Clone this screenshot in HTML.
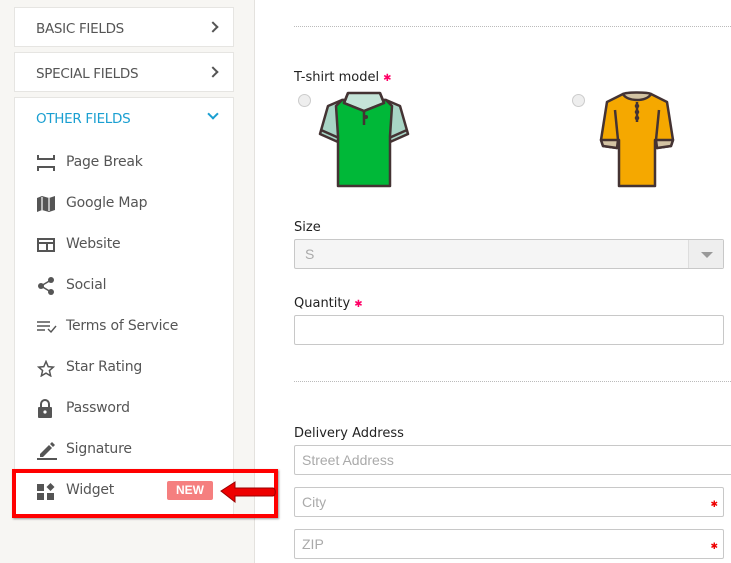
<!DOCTYPE html>
<html><head><meta charset="utf-8"><style>
*{box-sizing:border-box;margin:0;padding:0}
body{width:731px;height:563px;overflow:hidden;background:#fff;font-family:"DejaVu Sans","Liberation Sans",sans-serif;position:relative}
.side{position:absolute;left:0;top:0;width:255px;height:563px;background:#f7f6f3;border-right:1px solid #e4e2de}
.pan{position:absolute;left:14px;width:220px;background:#fff;border:1px solid #e6e5e2}
.hd{position:absolute;left:21px;font-size:13.5px;color:#555;letter-spacing:-.3px}
.chev{position:absolute;right:16px;width:8px;height:8px;border-right:2px solid #555;border-top:2px solid #555;transform:rotate(45deg)}
.item{position:absolute;left:52px;font-size:14px;color:#555;letter-spacing:-.2px}
.ic{position:absolute;left:37px}
.lab{position:absolute;left:294px;font-size:13px;color:#222}
.req{color:#f06;font-size:10px;margin-left:4px}
.inp{position:absolute;left:294px;height:30px;border:1px solid #c8c8c8;border-radius:2px;font-family:"Liberation Sans",sans-serif;font-size:14px;color:#aaa;padding:6px 7px}
.dot{position:absolute;right:5px;top:11px;color:#e00;font-size:9px}
.hr{position:absolute;left:294px;right:0;border-top:1px dotted #bbb}
.radio{position:absolute;width:13px;height:13px;border-radius:50%;border:1px solid #ccc;background:#eee}
</style></head><body>
<div class="side">
<div class="pan" style="top:7px;height:40px"><span class="hd" style="top:13px">BASIC FIELDS</span><span class="chev" style="top:15px"></span></div>
<div class="pan" style="top:52px;height:40px"><span class="hd" style="top:13px">SPECIAL FIELDS</span><span class="chev" style="top:15px"></span></div>
<div class="pan" style="top:97px;height:420px">
<span class="hd" style="top:13px;color:#1a9fd1">OTHER FIELDS</span><span class="chev" style="top:12px;border-color:#1a9fd1;transform:rotate(135deg)"></span>
</div>
<svg class="ic" style="top:155px" width="18" height="16" viewBox="0 0 18 16" fill="#555"><rect x="0" y="0" width="2" height="4"/><rect x="16" y="0" width="2" height="4"/><rect x="0" y="3" width="18" height="2"/><rect x="0" y="11" width="18" height="2"/><rect x="0" y="11" width="2" height="5"/><rect x="16" y="11" width="2" height="5"/></svg>
<span class="item" style="left:66px;top:154px">Page Break</span>
<svg class="ic" style="top:196px" width="18" height="16" viewBox="0 0 18 16" fill="#555"><path d="M0 2l5-2 7 2 6-2v14l-6 2-7-2-5 2z"/><path d="M5 1v13M12 2v13" stroke="#fff" stroke-width="1.2"/></svg>
<span class="item" style="left:66px;top:195px">Google Map</span>
<svg class="ic" style="top:238px" width="18" height="14" viewBox="0 0 18 14" fill="none" stroke="#555" stroke-width="2"><rect x="1" y="1" width="16" height="12"/><path d="M1 5h16M10 5v8" /></svg>
<span class="item" style="left:66px;top:236px">Website</span>
<svg class="ic" style="top:277px" width="18" height="18" viewBox="0 0 18 18"><path d="M14 3L4 9l10 6" stroke="#555" stroke-width="1.5" fill="none"/><circle cx="14" cy="3" r="3" fill="#555"/><circle cx="4" cy="9" r="3" fill="#555"/><circle cx="14" cy="15" r="3" fill="#555"/></svg>
<span class="item" style="left:66px;top:277px">Social</span>
<svg class="ic" style="top:321px" width="20" height="12" viewBox="0 0 20 12" stroke="#555" stroke-width="1.4" fill="none"><path d="M0 1h13M0 5h13M0 9h8M11 8l3 3 5-6"/></svg>
<span class="item" style="left:66px;top:318px">Terms of Service</span>
<svg class="ic" style="top:360px" width="18" height="17" viewBox="0 0 24 23" fill="none" stroke="#555" stroke-width="2"><path d="M12 2l3 7 7 .6-5.4 4.7 1.7 7.2L12 17.7 5.7 21.5l1.7-7.2L2 9.6 9 9z"/></svg>
<span class="item" style="left:66px;top:359px">Star Rating</span>
<svg class="ic" style="top:399px" width="16" height="19" viewBox="0 0 16 19"><path d="M4 8V5a4 4 0 018 0v3" stroke="#555" stroke-width="2" fill="none"/><rect x="1" y="8" width="14" height="11" rx="1" fill="#555"/><circle cx="8" cy="13" r="1.6" fill="#fff"/></svg>
<span class="item" style="left:66px;top:400px">Password</span>
<svg class="ic" style="top:440px" width="20" height="20" viewBox="0 0 20 20" fill="#555"><path d="M3 14l9-9 3 3-9 9H3z"/><path d="M13 4l2-2 3 3-2 2z"/><rect x="0" y="18" width="20" height="2"/></svg>
<span class="item" style="left:66px;top:441px">Signature</span>
<svg class="ic" style="top:483px" width="18" height="18" viewBox="0 0 18 18" fill="#555"><rect x="0" y="1" width="7" height="7"/><rect x="0" y="10" width="7" height="7"/><rect x="10" y="10" width="7" height="7"/><path d="M13.5 0l4 4-4 4-4-4z"/></svg>
<span class="item" style="left:66px;top:482px">Widget</span>
<span style="position:absolute;left:167px;top:481px;width:46px;height:19px;background:#f57f7f;border-radius:2px;color:#fff;font-family:'Liberation Sans',sans-serif;font-weight:bold;font-size:12px;text-align:center;line-height:19px">NEW</span>
<div style="position:absolute;left:12px;top:469px;width:266px;height:49px;border:4px solid #f00;box-shadow:1px 1px 2px rgba(0,0,0,.4)"></div>
<svg style="position:absolute;left:218px;top:480px" width="60" height="24" viewBox="0 0 60 24"><path d="M3 11L17 2v6h38c3 0 3 8 0 8H17v6z" fill="#e00" stroke="#900" stroke-width="1"/></svg>
</div>
<div class="hr" style="top:26px"></div>
<div class="lab" style="top:70px">T-shirt model<span class="req">✱</span></div>
<div class="radio" style="left:298px;top:94px"></div>
<div class="radio" style="left:572px;top:94px"></div>
<svg style="position:absolute;left:318px;top:90px" width="92" height="98" viewBox="0 0 92 98" stroke="#433" stroke-width="2.5" stroke-linejoin="round">
<path d="M24 10L10 16 2 44l18 8 2-6h48l2 6 18-8-8-28-14-6z" fill="#a8d5c5"/>
<path d="M3 40l18 8M89 40l-18 8" fill="none"/>
<path d="M24 10h44l6 6-2 30v50H20V46l-2-30z" fill="#00b838"/>
<path d="M30 3h32l4 10-20 8-20-8z" fill="#c5e4d8"/>
<path d="M30 3l-4 10 20 8M62 3l4 10-20 8M46 21v14" fill="none"/>
<circle cx="48" cy="27" r=".8" fill="#433"/>
</svg>
<svg style="position:absolute;left:597px;top:90px" width="80" height="98" viewBox="0 0 80 98" stroke="#433" stroke-width="2.5" stroke-linejoin="round">
<path d="M26 4L10 12 4 50l2 6 14 2 2-8v46h36V50l2 8 14-2 2-6-6-38-16-8c-4 6-24 6-28 0z" fill="#f5a800"/>
<path d="M4 50l2 6 14 2 1-8zM76 50l-2 6-14 2-1-8z" fill="#d3c3a3"/>
<path d="M26 4c4 8 24 8 28 0c-4-2-24-2-28 0z" fill="#d3c3a3"/>
<path d="M40 12v20M18 20l3 30M62 20l-3 30" fill="none"/>
<circle cx="40" cy="16" r="1" fill="#433"/><circle cx="40" cy="22" r="1" fill="#433"/><circle cx="40" cy="28" r="1" fill="#433"/>
</svg>
<div class="lab" style="top:220px">Size</div>
<div class="inp" style="top:239px;width:430px;background:#f5f5f5;padding:6px 10px">S<span style="position:absolute;right:0;top:0;width:35px;height:28px;border-left:1px solid #ddd;background:#eee"><span style="position:absolute;left:12px;top:12px;border:6px solid transparent;border-top-color:#999;border-bottom:0"></span></span></div>
<div class="lab" style="top:296px">Quantity<span class="req">✱</span></div>
<div class="inp" style="top:315px;width:430px"></div>
<div class="hr" style="top:381px"></div>
<div class="lab" style="top:426px">Delivery Address</div>
<div class="inp" style="top:445px;width:440px">Street Address</div>
<div class="inp" style="top:487px;width:430px">City<span class="dot">✱</span></div>
<div class="inp" style="top:529px;width:430px">ZIP<span class="dot">✱</span></div>
</body></html>
